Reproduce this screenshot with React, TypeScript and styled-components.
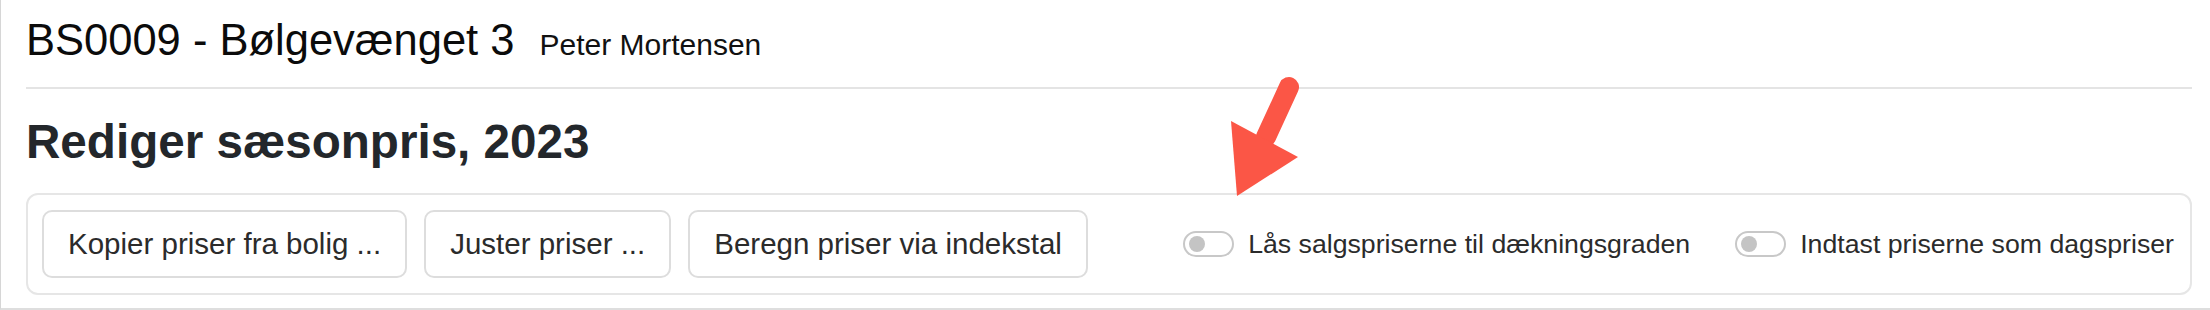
import { FC } from 'react';
import styled, { createGlobalStyle } from 'styled-components';

const GlobalStyle = createGlobalStyle`
    html, body {
        margin: 0;
        padding: 0;
        background: #ffffff;
    }
    body {
        font-family: "Liberation Sans", Helvetica, Arial, sans-serif;
        color: #212529;
    }
`;

const Frame = styled.div`
    position: relative;
    box-sizing: border-box;
    height: 310px;
    padding: 0 18px 0 25px;
    border-left: 1px solid #d6d6d6;
    border-bottom: 2px solid #dedede;
    overflow: hidden;
`;

const Header = styled.div`
    display: flex;
    align-items: baseline;
    gap: 25px;
    height: 89px;
    box-sizing: border-box;
    padding-top: 16px;
    border-bottom: 2px solid #e4e4e4;
`;

const Title = styled.h1`
    margin: 0;
    font-size: 43.5px;
    font-weight: 400;
    line-height: 48px;
    color: #0b0b0b;
`;

const Owner = styled.span`
    font-size: 30px;
    color: #111;
`;

const Heading = styled.h2`
    margin: 0;
    padding-top: 23px;
    font-size: 47.6px;
    font-weight: 700;
    line-height: 60px;
    color: #23272b;
`;

const Card = styled.div`
    display: flex;
    align-items: center;
    gap: 17px;
    box-sizing: border-box;
    height: 102px;
    margin-top: 21px;
    padding: 0 16px 0 14px;
    border: 2px solid #e6e6e6;
    border-radius: 12px;
`;

const Button = styled.button`
    box-sizing: border-box;
    height: 68px;
    padding: 0 24px;
    font-family: inherit;
    font-size: 29.5px;
    color: #2b2b2b;
    background: #ffffff;
    border: 2px solid #dddddd;
    border-radius: 10px;
    cursor: pointer;
`;

const Toggles = styled.div`
    display: flex;
    align-items: center;
    gap: 45px;
    margin-left: auto;
`;

const ToggleRow = styled.label`
    display: flex;
    align-items: center;
    gap: 14px;
    font-size: 26.7px;
    color: #2b2b2b;
`;

const Switch = styled.span<{ $on?: boolean }>`
    position: relative;
    box-sizing: border-box;
    width: 51px;
    height: 26px;
    border: 2px solid #c8c8c8;
    border-radius: 13px;
    background: ${p => (p.$on ? '#0d6efd' : '#ffffff')};

    &::after {
        content: '';
        position: absolute;
        top: 3px;
        left: ${p => (p.$on ? '28px' : '4px')};
        width: 16px;
        height: 16px;
        border-radius: 50%;
        background: ${p => (p.$on ? '#ffffff' : '#c4c4c4')};
    }
`;

const Arrow = styled.svg`
    position: absolute;
    left: 1218px;
    top: 75px;
    width: 90px;
    height: 130px;
    pointer-events: none;
`;

const toggles = [
    'Lås salgspriserne til dækningsgraden',
    'Indtast priserne som dagspriser',
];

const App: FC = () => {
    return (
        <>
            <GlobalStyle />
            <Frame>
                <Header>
                    <Title>BS0009 - Bølgevænget 3</Title>
                    <Owner>Peter Mortensen</Owner>
                </Header>

                <Heading>Rediger sæsonpris, 2023</Heading>

                <Card>
                    <Button>Kopier priser fra bolig ...</Button>
                    <Button>Juster priser ...</Button>
                    <Button>Beregn priser via indekstal</Button>

                    <Toggles>
                        {toggles.map(t => (
                            <ToggleRow key={t}>
                                <Switch />
                                <span>{t}</span>
                            </ToggleRow>
                        ))}
                    </Toggles>
                </Card>

                <Arrow viewBox="0 0 90 130">
                    <line x1="70" y1="12" x2="47" y2="62" stroke="#fb5646" strokeWidth="20" strokeLinecap="round" />
                    <polygon points="12,46 79,82 18,121" fill="#fb5646" />
                </Arrow>
            </Frame>
        </>
    );
};

export default App;
